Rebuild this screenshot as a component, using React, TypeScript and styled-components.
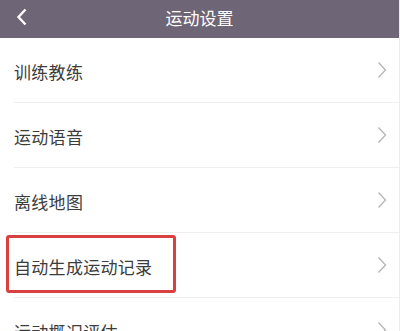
import styled, { createGlobalStyle } from "styled-components";

const GlobalStyle = createGlobalStyle`
  html, body {
    margin: 0;
    padding: 0;
    background: #ffffff;
    font-family: "Noto Sans CJK SC", "Noto Sans", sans-serif;
  }
`;

const Page = styled.div`
  width: 400px;
  height: 331px;
  overflow: hidden;
  display: flex;
  flex-direction: column;
  background: #ffffff;
  border-right: 1px solid #ececec;
  box-sizing: border-box;
`;

const Header = styled.div`
  height: 38px;
  flex-shrink: 0;
  display: flex;
  align-items: center;
  justify-content: center;
  position: relative;
  background: #6e6677;
  color: #ffffff;
  font-size: 17px;
  padding-bottom: 3px;
  box-sizing: border-box;
`;

const BackButton = styled.div`
  position: absolute;
  left: 14px;
  top: 7px;
  width: 16px;
  height: 20px;
  display: flex;
  align-items: center;
  justify-content: center;
`;

const List = styled.div`
  display: flex;
  flex-direction: column;
`;

const Row = styled.div<{ $highlight?: boolean }>`
  position: relative;
  height: 65px;
  flex-shrink: 0;
  display: flex;
  align-items: center;
  justify-content: space-between;
  margin-left: 14px;
  padding-right: 12px;
  border-bottom: 1px solid #efefef;
  box-sizing: border-box;
`;

const Label = styled.span`
  font-size: 17px;
  color: #3c3c3c;
  letter-spacing: 0.3px;
  padding-top: 2px;
`;

const Highlight = styled.div`
  position: absolute;
  left: -8px;
  top: 2px;
  width: 170px;
  height: 58px;
  border: 3px solid #d8413f;
  border-radius: 3px;
  box-sizing: border-box;
`;

const Chevron = () => (
  <svg width="10" height="18" viewBox="0 0 10 18">
    <path d="M1.5 1.5 L8.5 9 L1.5 16.5" fill="none" stroke="#b5b5b5" strokeWidth="1.3" />
  </svg>
);

const items = ["训练教练", "运动语音", "离线地图", "自动生成运动记录", "运动概况评估"];

export default function App() {
  return (
    <Page>
      <GlobalStyle />
      <Header>
        <BackButton>
          <svg width="12" height="18" viewBox="0 0 12 18">
            <path d="M9.5 1.5 L2.5 9 L9.5 16.5" fill="none" stroke="#ffffff" strokeWidth="2.4" />
          </svg>
        </BackButton>
        运动设置
      </Header>
      <List>
        {items.map((item, i) => (
          <Row key={item}>
            {i === 3 && <Highlight />}
            <Label>{item}</Label>
            <Chevron />
          </Row>
        ))}
      </List>
    </Page>
  );
}
